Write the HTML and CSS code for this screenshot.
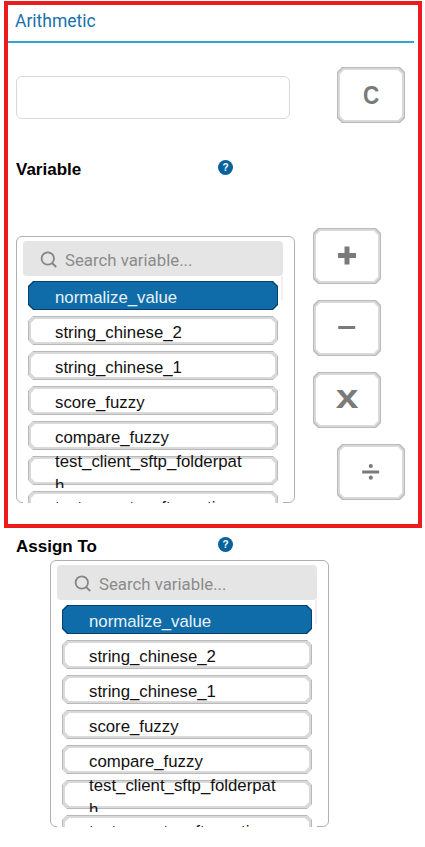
FILE: index.html
```
<!DOCTYPE html>
<html lang="en">
<head>
<meta charset="utf-8">
<title>Arithmetic</title>
<link rel="stylesheet" href="styles.css">
</head>
<body>
<section class="arithmetic">
  <h1 class="title">Arithmetic</h1>
  <div class="entry"><input class="field" aria-label="Expression"><button class="key"><span class="clear">C</span></button></div>
  <div class="label-row"><h2>Variable</h2><span class="help">?</span></div>
  <div class="workspace">
    <div class="panel">
      <div class="search"><svg width="18" height="18" viewBox="0 0 18 18"><circle cx="7.8" cy="7.5" r="6.2"/><path d="M12 12l4.2 4"/></svg><span>Search variable...</span></div>
      <div class="list">
        <div class="item selected"><span>normalize_value</span></div>
        <div class="item"><span>string_chinese_2</span></div>
        <div class="item"><span>string_chinese_1</span></div>
        <div class="item"><span>score_fuzzy</span></div>
        <div class="item"><span>compare_fuzzy</span></div>
        <div class="item wrapped"><span>test_client_sftp_folderpath</span></div>
        <div class="item"><span>test_remote_sftp_action</span></div>
      </div>
    </div>
    <div class="keys">
      <button class="key"><svg width="20" height="20" viewBox="0 0 20 20"><path class="plus" d="M1 9.5h18M10 .5v18"/></svg></button>
      <button class="key"><svg width="20" height="20" viewBox="0 0 20 20"><path class="minus" d="M1.2 9.5h17"/></svg></button>
      <button class="key"><span class="times">x</span></button>
      <button class="key divide"><svg width="20" height="20" viewBox="0 0 20 20"><path class="minus" d="M1.2 10h17"/><circle class="dot" cx="9.8" cy="4" r="2.1"/><circle class="dot" cx="9.8" cy="15.7" r="2.1"/></svg></button>
    </div>
  </div>
</section>
<section class="assign">
  <div class="label-row"><h2>Assign To</h2><span class="help">?</span></div>
  <div class="panel">
    <div class="search"><svg width="18" height="18" viewBox="0 0 18 18"><circle cx="7.8" cy="7.5" r="6.2"/><path d="M12 12l4.2 4"/></svg><span>Search variable...</span></div>
    <div class="list">
      <div class="item selected"><span>normalize_value</span></div>
      <div class="item"><span>string_chinese_2</span></div>
      <div class="item"><span>string_chinese_1</span></div>
      <div class="item"><span>score_fuzzy</span></div>
      <div class="item"><span>compare_fuzzy</span></div>
      <div class="item wrapped"><span>test_client_sftp_folderpath</span></div>
      <div class="item"><span>test_remote_sftp_action</span></div>
    </div>
  </div>
</section>
</body>
</html>
```
FILE: styles.css
```
* { box-sizing: border-box; }
body { margin: 0; width: 425px; height: 847px; overflow: hidden; background: #fff; color: #111; font-family: "Liberation Sans", Arial, sans-serif; }
h1, h2 { margin: 0; }
.arithmetic { width: 418px; height: 527px; margin: 1px 0 0 4px; border: 4px solid #ec1c1e; }
.title { width: 406px; height: 38px; padding: 4px 0 0 7px; border-bottom: 2px solid #32a3d5; color: #1872ab; font: 400 17.5px/24px Roboto, sans-serif; }
.entry { display: flex; padding: 24px 0 0 8px; }
.field { width: 274px; height: 43px; margin-top: 9px; border: 1px solid #d8d8d8; border-radius: 6px; background: #fff; }
.key { position: relative; display: flex; align-items: center; justify-content: center; width: 68px; height: 56px; padding: 0; border: 0; background: #b9b9b9; color: #7a7a7a; font: bold 25px/28px "Liberation Sans", sans-serif; }
.entry .key { margin-left: 47px; }
.key, .key::before, .item, .item::before { --cut: 5px; }
.key::after, .item::after { --cut: 4px; }
.key, .key::before, .key::after, .item::before, .item::after { clip-path: polygon(var(--cut) 0, calc(100% - var(--cut)) 0, 100% var(--cut), 100% calc(100% - var(--cut)), calc(100% - var(--cut)) 100%, var(--cut) 100%, 0 calc(100% - var(--cut)), 0 var(--cut)); }
.key::before { content: ""; position: absolute; inset: 1px; background: #d9d9d9; }
.key::after { content: ""; position: absolute; inset: 3px; background: #fff; }
.key > * { position: relative; z-index: 1; }
.key svg { fill: none; stroke: #7a7a7a; }
.clear { transform: scaleX(.9); }
.plus { stroke-width: 5; }
.minus { stroke-width: 3; }
.dot { fill: #7a7a7a; stroke: none; }
.times { font-size: 33px; transform: translateY(-3px) scaleX(1.24); }
.label-row { display: flex; align-items: center; height: 24px; }
.label-row h2 { width: 202px; color: #000; font-size: 17px; line-height: 24px; }
.arithmetic .label-row { margin: 35px 0 0 8px; }
.help { width: 15px; height: 15px; border-radius: 50%; background: #07629c; color: #fff; font: bold 10px/15px "Liberation Sans", sans-serif; text-align: center; }
.arithmetic .help { margin-top: -5px; }
.workspace { display: flex; padding: 54px 0 0 8px; }
.panel { width: 279px; height: 267px; padding: 4px 11px 0 6px; border: 1px solid #b0b0b0; border-radius: 6px; }
.search { display: flex; align-items: center; gap: 7px; width: 260px; height: 35px; padding-left: 17px; border-radius: 4px; background: #e5e5e5; color: #8b8b8b; font: 16.8px/24px Roboto, sans-serif; }
.search span { padding-top: 3px; }
.search svg { margin-top: 3px; fill: none; stroke: #858585; stroke-width: 1.8; }
.list { position: relative; width: 260px; height: 227px; padding: 5px; overflow: hidden; background: #fff; }
.list::after { content: ""; position: absolute; right: 0; top: 0; width: 2px; height: 24px; background: #f0f0f0; }
.item { position: relative; width: 250px; height: 29px; margin-bottom: 6px; padding: 5px 27px 0; }
.item::before { content: ""; position: absolute; inset: 0; background: linear-gradient(#d9d9d9, #d9d9d9) center / calc(100% - 2px) calc(100% - 2px) no-repeat #b9b9b9; }
.item::after { content: ""; position: absolute; inset: 3px; background: #fff; }
.item span { position: relative; z-index: 1; display: block; font-size: 16.8px; line-height: 24px; word-break: break-all; }
.item.selected::before { background: #073f6d; }
.item.selected::after { --cut: 5px; inset: 1px; background: #0f6ca8; }
.selected span { color: #e8f2f9; }
.wrapped span { top: -11px; width: 192px; height: 38px; overflow: hidden; }
.keys { display: flex; flex-direction: column; gap: 16px; margin: -8px 0 0 18px; }
.divide { margin-left: 24px; }
.assign { padding: 7px 0 0 16px; }
.assign .panel { margin: 1px 0 0 34px; }
.assign .help { margin-top: -5px; }
```
